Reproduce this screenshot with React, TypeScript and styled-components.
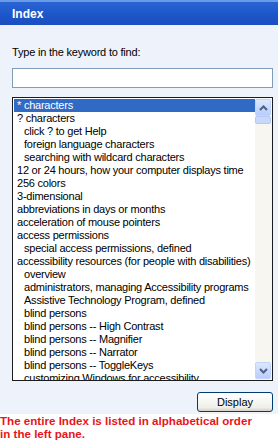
import styled, { createGlobalStyle } from 'styled-components';

const GlobalStyle = createGlobalStyle`
  html, body {
    margin: 0;
    padding: 0;
    background: #ffffff;
  }
  body {
    font-family: "Liberation Sans", Arial, sans-serif;
  }
`;

const entries: { text: string; indent?: boolean }[] = [
  { text: '* characters' },
  { text: '? characters' },
  { text: 'click ? to get Help', indent: true },
  { text: 'foreign language characters', indent: true },
  { text: 'searching with wildcard characters', indent: true },
  { text: '12 or 24 hours, how your computer displays time' },
  { text: '256 colors' },
  { text: '3-dimensional' },
  { text: 'abbreviations in days or months' },
  { text: 'acceleration of mouse pointers' },
  { text: 'access permissions' },
  { text: 'special access permissions, defined', indent: true },
  { text: 'accessibility resources (for people with disabilities)' },
  { text: 'overview', indent: true },
  { text: 'administrators, managing Accessibility programs', indent: true },
  { text: 'Assistive Technology Program, defined', indent: true },
  { text: 'blind persons', indent: true },
  { text: 'blind persons -- High Contrast', indent: true },
  { text: 'blind persons -- Magnifier', indent: true },
  { text: 'blind persons -- Narrator', indent: true },
  { text: 'blind persons -- ToggleKeys', indent: true },
  { text: 'customizing Windows for accessibility', indent: true },
];

const Pane = styled.div`
  width: 278px;
  background: #eef2fb;
  display: flex;
  flex-direction: column;
`;

const TitleBar = styled.div`
  height: 25px;
  border-top: 2px solid #6a9be8;
  background: linear-gradient(#2a64d4, #1c55c8 60%, #1a4fbf);
  color: #ffffff;
  font-weight: bold;
  font-size: 12px;
  display: flex;
  align-items: center;
  padding-left: 12px;
  box-sizing: border-box;
`;

const Body = styled.div`
  padding: 21px 5px 0 12px;
  display: flex;
  flex-direction: column;
`;

const Label = styled.div`
  font-size: 11px;
  letter-spacing: -0.2px;
  color: #000;
  height: 13px;
  line-height: 13px;
`;

const Input = styled.div`
  margin-top: 9px;
  height: 20px;
  border: 1px solid #7f9db9;
  background: #fff;
  box-sizing: border-box;
`;

const ListBox = styled.div`
  margin-top: 9px;
  height: 284px;
  border: 1px solid #1c1c1c;
  background: #fff;
  display: flex;
  box-sizing: border-box;
  overflow: hidden;
`;

const Rows = styled.div`
  flex: 1;
  min-width: 0;
  padding: 1px 0 0 1px;
  overflow: hidden;
`;

const Row = styled.div<{ $selected?: boolean; $indent?: boolean }>`
  height: 13px;
  line-height: 13px;
  font-size: 11px;
  letter-spacing: -0.23px;
  white-space: nowrap;
  padding-left: ${({ $indent }) => ($indent ? '10px' : '3px')};
  color: ${({ $selected }) => ($selected ? '#fff' : '#000')};
  background: ${({ $selected }) => ($selected ? '#316ac5' : 'transparent')};
`;

const ScrollBar = styled.div`
  width: 17px;
  flex-shrink: 0;
  background: #f7f6f0;
  display: flex;
  flex-direction: column;
  padding: 1px 1px 1px 0;
  box-sizing: border-box;
`;

const ArrowButton = styled.div`
  height: 17px;
  border: 1px solid #c3d3fd;
  border-radius: 2px;
  background: linear-gradient(#dde8fe, #b8cdfb);
  display: flex;
  align-items: center;
  justify-content: center;
  box-sizing: border-box;
`;

const Thumb = styled.div`
  height: 8px;
  border: 1px solid #b5c9f5;
  border-radius: 2px;
  background: #c8d8fc;
  box-sizing: border-box;
`;

const Track = styled.div`
  flex: 1;
`;

const ButtonRow = styled.div`
  display: flex;
  justify-content: flex-end;
  margin-top: 11px;
  padding-bottom: 2px;
`;

const Button = styled.div`
  width: 76px;
  height: 20px;
  border: 1px solid #003c74;
  border-radius: 3px;
  background: linear-gradient(#ffffff, #f0f0ea 80%, #d6d0c5);
  font-size: 11px;
  display: flex;
  align-items: center;
  justify-content: center;
  box-sizing: border-box;
`;

const Note = styled.div`
  background: #fff;
  color: #e8141a;
  font-weight: bold;
  font-size: 11.6px;
  line-height: 13px;
  padding: 0;
`;

const Chevron = ({ up }: { up?: boolean }) => (
  <svg width="9" height="6" viewBox="0 0 9 6">
    <path
      d={up ? 'M1 5 L4.5 1.5 L8 5' : 'M1 1 L4.5 4.5 L8 1'}
      fill="none"
      stroke="#4d6185"
      strokeWidth="2"
    />
  </svg>
);

export default function App() {
  return (
    <>
      <GlobalStyle />
      <Pane>
        <TitleBar>Index</TitleBar>
        <Body>
          <Label>Type in the keyword to find:</Label>
          <Input />
          <ListBox>
            <Rows>
              {entries.map((e, i) => (
                <Row key={i} $selected={i === 0} $indent={e.indent}>
                  {e.text}
                </Row>
              ))}
            </Rows>
            <ScrollBar>
              <ArrowButton>
                <Chevron up />
              </ArrowButton>
              <Thumb />
              <Track />
              <ArrowButton>
                <Chevron />
              </ArrowButton>
            </ScrollBar>
          </ListBox>
          <ButtonRow>
            <Button>Display</Button>
          </ButtonRow>
        </Body>
      </Pane>
      <Note>
        The entire Index is listed in alphabetical order
        <br />
        in the left pane.
      </Note>
    </>
  );
}
